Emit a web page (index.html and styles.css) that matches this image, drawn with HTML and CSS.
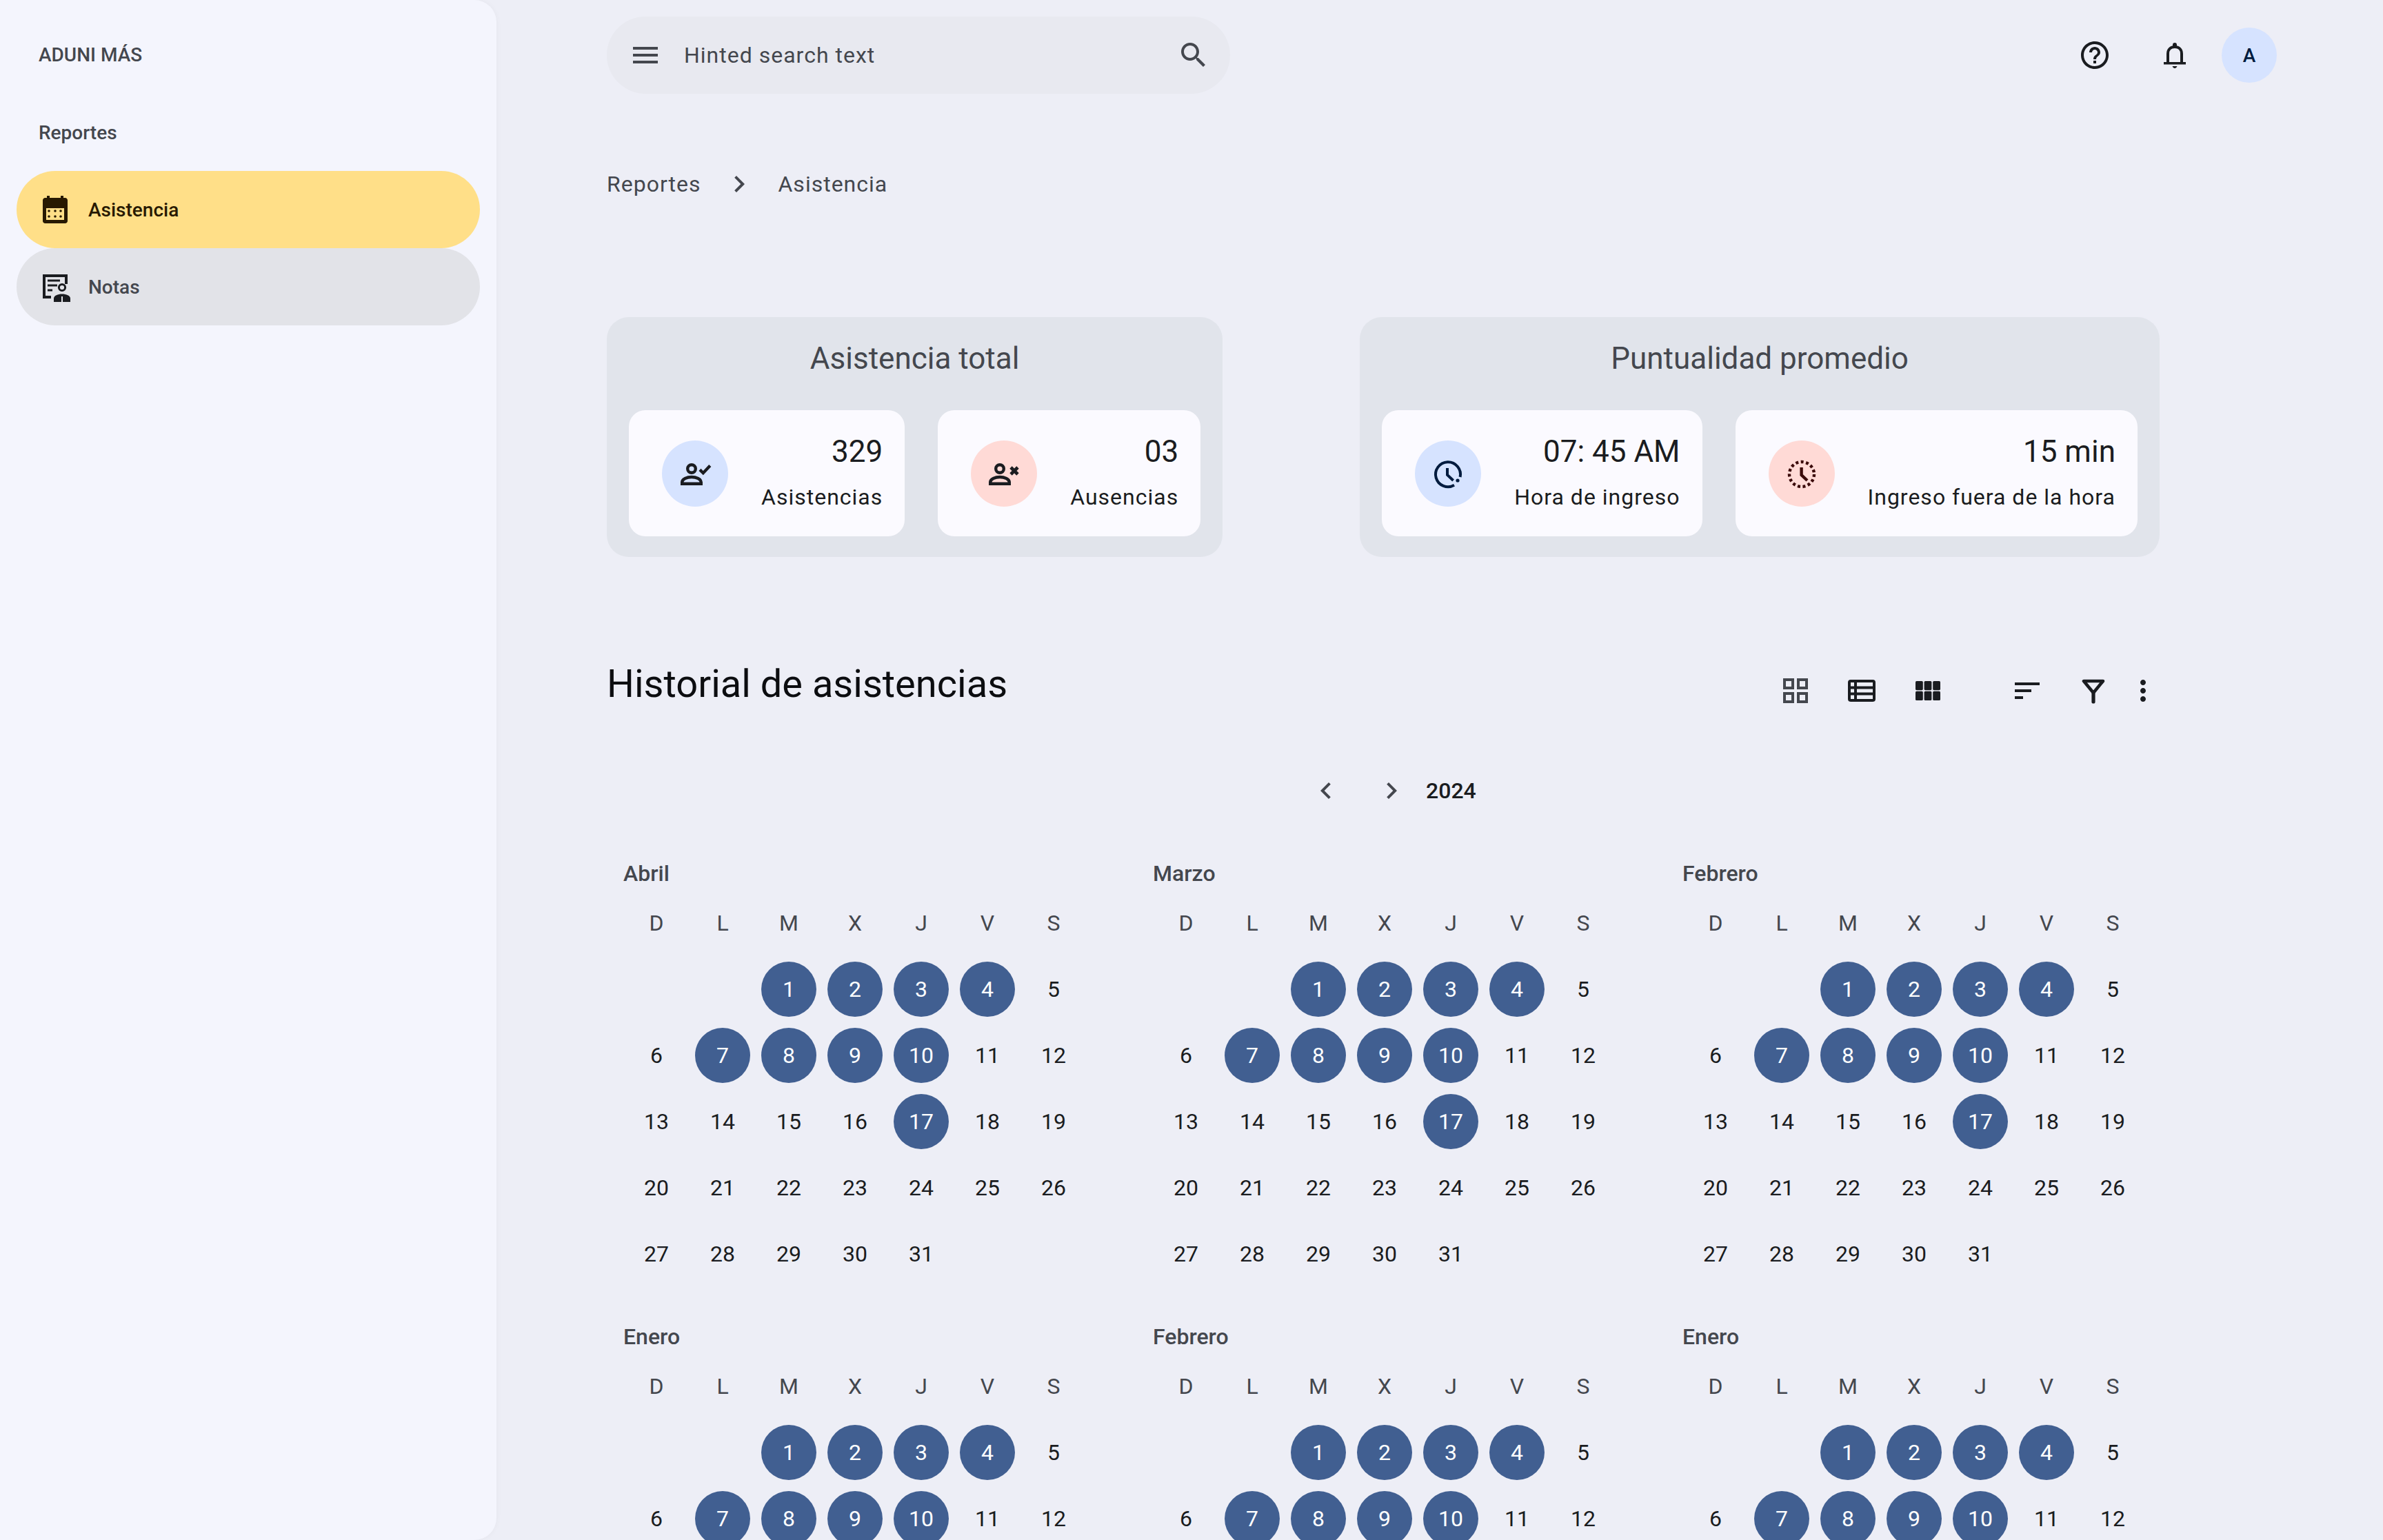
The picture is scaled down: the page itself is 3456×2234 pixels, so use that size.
FILE: index.html
```html
<!DOCTYPE html>
<html lang="es">
<head>
<meta charset="UTF-8">
<meta name="viewport" content="width=device-width, initial-scale=1.0">
<title>Asistencia</title>
<link rel="stylesheet" href="styles.css">
</head>
<body>
<div class="app">
  <aside class="sidebar">
    <div class="brand">ADUNI MÁS</div>
    <div class="nav-title">Reportes</div>
    <a class="nav-item active">
      <svg class="icon" viewBox="0 0 24 24">
        <path fill="#271900" fill-rule="evenodd" d="M6 2h2v1.500h8V2h2v1.500h1.200c1 0 1.800.8 1.800 1.800v15c0 1-.8 1.700-1.800 1.700H4.800c-1 0-1.800-.7-1.800-1.700v-15c0-1 .8-1.800 1.800-1.800H6zM5.500 11v8.500h13V11z"/>
        <g fill="#271900"><circle cx="7.500" cy="13" r=".9"/><circle cx="12" cy="13" r=".9"/><circle cx="16" cy="13" r=".9"/><circle cx="7.500" cy="17" r=".9"/><circle cx="12" cy="17" r=".9"/><circle cx="16" cy="17" r=".9"/></g>
      </svg>
      <span>Asistencia</span>
    </a>
    <a class="nav-item muted">
      <svg class="icon" viewBox="0 0 24 24">
        <path fill="none" stroke="#1a1c20" stroke-width="2" d="M20 10V4H4v15.500h5"/>
        <path fill="none" stroke="#1a1c20" stroke-width="1.500" d="M6.500 7.500h9M6.500 11h7M6.500 14.500h3.500"/>
        <circle cx="17" cy="12.500" r="2.300" fill="none" stroke="#1a1c20" stroke-width="1.500"/>
        <path fill="#1a1c20" d="M11 23v-2.500c0-2 3-3.200 6-3.200s6 1.200 6 3.200V23z"/>
        <path fill="#e2e3e8" d="M16.500 19h1v4h-1z"/>
      </svg>
      <span>Notas</span>
    </a>
  </aside>

  <main class="main">
    <header class="topbar">
      <div class="search">
        <svg class="icon grey" viewBox="0 0 24 24"><path d="M3 18h18v-2H3v2zm0-5h18v-2H3v2zm0-7v2h18V6H3z"/></svg>
        <span class="search-text">Hinted search text</span>
        <svg class="icon grey search-icon" viewBox="0 0 24 24"><path d="M15.500 14h-.79l-.28-.27C15.410 12.590 16 11.110 16 9.500 16 5.910 13.090 3 9.500 3S3 5.910 3 9.500 5.910 16 9.500 16c1.610 0 3.090-.59 4.230-1.570l.27.28v.79l5 4.990L20.490 19l-4.990-5zm-6 0C7.010 14 5 11.990 5 9.500S7.010 5 9.500 5 14 7.010 14 9.500 11.990 14 9.500 14z"/></svg>
      </div>
      <div class="top-actions">
        <svg class="icon" viewBox="0 0 24 24"><path d="M11 18h2v-2h-2v2zm1-16C6.480 2 2 6.480 2 12s4.480 10 10 10 10-4.480 10-10S17.520 2 12 2zm0 18c-4.410 0-8-3.590-8-8s3.590-8 8-8 8 3.590 8 8-3.590 8-8 8zm0-14c-2.210 0-4 1.790-4 4h2c0-1.100.9-2 2-2s2 .9 2 2c0 2-3 1.750-3 5h2c0-2.250 3-2.500 3-5 0-2.210-1.790-4-4-4z"/></svg>
        <svg class="icon" viewBox="0 0 24 24">
          <path d="M4 17h16v1.800H4zM10.500 4.500a1.500 1.500 0 0 1 3 0v1h-3zM10.300 20h3.400c-.2.8-.9 1.500-1.700 1.500s-1.500-.7-1.700-1.500z"/>
          <path fill="none" stroke="#1a1c20" stroke-width="2" d="M7 17.500V11c0-3 2-5 5-5s5 2 5 5v6.500"/>
        </svg>
        <div class="avatar">A</div>
      </div>
    </header>

    <nav class="crumbs">
      <span>Reportes</span>
      <svg class="icon grey" viewBox="0 0 24 24"><path d="M10 6L8.590 7.410 13.170 12l-4.580 4.590L10 18l6-6z"/></svg>
      <span>Asistencia</span>
    </nav>

    <section class="summary">
      <div class="summary-card">
        <h2>Asistencia total</h2>
        <div class="stats">
          <div class="stat">
            <div class="stat-icon blue">
              <svg class="icon line" viewBox="0 0 24 24" stroke="#1a1c20" stroke-width="2.200">
                <circle cx="9.500" cy="8.500" r="2.900"/>
                <path d="M2.600 19.400v-1.200c0-2.300 3.600-3.700 6.900-3.700s6.900 1.400 6.900 3.700v1.200z"/>
                <path d="M15.500 9.200l2.400 2.400 5-5.300"/>
              </svg>
            </div>
            <div class="stat-text"><div class="stat-value">329</div><div class="stat-label">Asistencias</div></div>
          </div>
          <div class="stat">
            <div class="stat-icon pink">
              <svg class="icon line" viewBox="0 0 24 24" stroke="#1a1c20" stroke-width="2.200">
                <circle cx="9" cy="8.500" r="2.900"/>
                <path d="M2.100 19.400v-1.200c0-2.300 3.600-3.700 6.900-3.700s6.900 1.400 6.900 3.700v1.200z"/>
                <path d="M17 7.500l5 5M22 7.500l-5 5" stroke-width="2.400"/>
              </svg>
            </div>
            <div class="stat-text"><div class="stat-value">03</div><div class="stat-label">Ausencias</div></div>
          </div>
        </div>
      </div>

      <div class="summary-card">
        <h2>Puntualidad promedio</h2>
        <div class="stats">
          <div class="stat">
            <div class="stat-icon blue">
              <svg class="icon line" viewBox="0 0 24 24" stroke="#001b3e" stroke-width="2">
                <path d="M20.800 14.500A9 9 0 1 0 16.500 20.400"/>
                <path d="M11.500 8v5l4.300 4"/>
                <circle cx="19" cy="17" r="1.300" fill="#001b3e" stroke="none"/>
              </svg>
            </div>
            <div class="stat-text"><div class="stat-value">07: 45 AM</div><div class="stat-label">Hora de ingreso</div></div>
          </div>
          <div class="stat">
            <div class="stat-icon pink">
              <svg class="icon line" viewBox="0 0 24 24" stroke="#3b0a0a" stroke-width="2.200">
                <circle cx="12" cy="12.500" r="9" stroke-dasharray="2 1.770"/>
                <path d="M11.800 7.500v5.500l4.200 4"/>
              </svg>
            </div>
            <div class="stat-text"><div class="stat-value">15 min</div><div class="stat-label">Ingreso fuera de la hora</div></div>
          </div>
        </div>
      </div>
    </section>

    <section class="history-head">
      <h1>Historial de asistencias</h1>
      <div class="tools">
        <svg class="icon grey" viewBox="0 0 24 24"><path d="M3 3v8h8V3H3zm6 6H5V5h4v4zm-6 4v8h8v-8H3zm6 6H5v-4h4v4zm4-16v8h8V3h-8zm6 6h-4V5h4v4zm-6 4v8h8v-8h-8zm6 6h-4v-4h4v4z"/></svg>
        <svg class="icon line" viewBox="0 0 24 24" stroke="#1a1c20" stroke-width="2">
          <rect x="3" y="5" width="18" height="14" rx="1"/>
          <path d="M7.500 5v14M3 9.700h18M3 14.300h18"/>
        </svg>
        <svg class="icon" viewBox="0 0 24 24">
          <rect x="3" y="5" width="5.400" height="6.600" rx=".8"/><rect x="9.300" y="5" width="5.400" height="6.600" rx=".8"/><rect x="15.600" y="5" width="5.400" height="6.600" rx=".8"/>
          <rect x="3" y="12.400" width="5.400" height="6.600" rx=".8"/><rect x="9.300" y="12.400" width="5.400" height="6.600" rx=".8"/><rect x="15.600" y="12.400" width="5.400" height="6.600" rx=".8"/>
        </svg>
        <svg class="icon tool-sep" viewBox="0 0 24 24"><path d="M3 18h6v-2H3v2zM3 6v2h18V6H3zm0 7h12v-2H3v2z"/></svg>
        <svg class="icon line" viewBox="0 0 24 24" stroke="#1a1c20" stroke-width="2.300" stroke-linejoin="round" stroke-linecap="round">
          <path d="M5 5h14l-7 8.500z"/><path d="M12 13v7" stroke-width="2.600"/>
        </svg>
        <svg class="icon tool-more" viewBox="0 0 24 24"><path d="M12 8c1.100 0 2-.9 2-2s-.9-2-2-2-2 .9-2 2 .9 2 2 2zm0 2c-1.100 0-2 .9-2 2s.9 2 2 2 2-.9 2-2-.9-2-2-2zm0 6c-1.100 0-2 .9-2 2s.9 2 2 2 2-.9 2-2-.9-2-2-2z"/></svg>
      </div>
    </section>

    <div class="year-nav">
      <svg class="icon grey" viewBox="0 0 24 24"><path d="M15.410 7.410L14 6l-6 6 6 6 1.410-1.410L10.830 12z"/></svg>
      <svg class="icon grey" viewBox="0 0 24 24"><path d="M10 6L8.590 7.410 13.170 12l-4.580 4.590L10 18l6-6z"/></svg>
      <span class="year">2024</span>
    </div>

    <section class="months" id="months"></section>
  </main>
</div>

<script>
  // the lower calendars run off the window after the second week
  let months = [
    { name: 'Abril', days: 31 },
    { name: 'Marzo', days: 31 },
    { name: 'Febrero', days: 31 },
    { name: 'Enero', days: 12 },
    { name: 'Febrero', days: 12 },
    { name: 'Enero', days: 12 }
  ];
  let weekdays = ['D', 'L', 'M', 'X', 'J', 'V', 'S'];
  let attended = [1, 2, 3, 4, 7, 8, 9, 10, 17];
  let container = document.getElementById('months');

  months.forEach((item) => {
    let html = `<div class="month-name">${item.name}</div><div class="month-grid">`;
    weekdays.forEach((day) => {
      html += `<div class="weekday">${day}</div>`;
    });
    html += '<div class="day"></div><div class="day"></div>';
    for (let i = 1; i <= item.days; i++) {
      let cls = attended.includes(i) ? 'day on' : 'day';
      html += `<div class="${cls}"><span>${i}</span></div>`;
    }
    html += '</div>';
    let month = document.createElement('div');
    month.className = 'month';
    month.innerHTML = html;
    container.appendChild(month);
  });
</script>
</body>
</html>
```

FILE: styles.css
```css
* {
  box-sizing: border-box;
}
html, body {
  margin: 0;
  padding: 0;
  height: 100%;
  overflow: hidden;
}
body {
  font-family: Roboto, "Liberation Sans", sans-serif;
  color: #1a1c20;
  background-color: #edeef6;
}
.app {
  display: flex;
  height: 2234px;
  overflow: hidden;
}
.icon {
  display: block;
  flex: none;
  width: 48px;
  height: 48px;
  fill: #1a1c20;
}
.icon.grey {
  fill: #44474e;
}
.icon.line {
  fill: none;
}

/* sidebar */
.sidebar {
  flex: none;
  width: 720px;
  padding: 0 24px;
  background-color: #f4f5fd;
  border-radius: 0 32px 32px 0;
  box-shadow: 0 0 8px rgba(0, 0, 0, 0.04);
}
.brand {
  height: 160px;
  padding-left: 32px;
  line-height: 160px;
  font-size: 28px;
  font-weight: 500;
  color: #44474e;
}
.nav-title {
  height: 88px;
  padding-left: 32px;
  line-height: 65px;
  font-size: 28px;
  font-weight: 500;
  color: #44474e;
}
.nav-item {
  display: flex;
  align-items: center;
  gap: 24px;
  height: 112px;
  padding-left: 32px;
  border-radius: 56px;
  font-size: 28px;
  font-weight: 500;
}
.nav-item.active {
  background-color: #ffdf88;
  color: #271900;
}
.nav-item.muted {
  background-color: #e2e3e8;
  color: #44474e;
}

/* main column */
.main {
  flex: 1;
  min-width: 0;
  padding: 24px 324px 0 160px;
}
.topbar {
  display: flex;
  align-items: center;
  justify-content: space-between;
  height: 112px;
  margin-right: -170px;
}
.search {
  display: flex;
  align-items: center;
  gap: 32px;
  width: 904px;
  height: 112px;
  padding: 0 29px 0 32px;
  border-radius: 56px;
  background-color: #e8e9f0;
}
.search-text {
  flex: 1;
  font-size: 32px;
  letter-spacing: 1px;
  color: #44474e;
}
.top-actions {
  display: flex;
  align-items: center;
  gap: 68px;
}
.avatar {
  display: flex;
  align-items: center;
  justify-content: center;
  width: 80px;
  height: 80px;
  margin-left: -24px;
  border-radius: 50%;
  background-color: #d6e3ff;
  color: #001b3e;
  font-size: 28px;
  font-weight: 500;
}
.crumbs {
  display: flex;
  align-items: center;
  gap: 32px;
  height: 48px;
  margin-top: 107px;
  font-size: 32px;
  letter-spacing: 1px;
  color: #44474e;
}

/* summary cards */
.summary {
  display: flex;
  gap: 199px;
  margin-top: 169px;
}
.summary-card {
  padding: 0 32px 30px;
  border-radius: 32px;
  background-color: #e1e4eb;
}
.summary-card h2 {
  height: 135px;
  margin: 0;
  padding-top: 30px;
  line-height: 60px;
  text-align: center;
  font-size: 44px;
  font-weight: 400;
  color: #44474e;
}
.stats {
  display: flex;
  gap: 48px;
}
.stat {
  display: flex;
  align-items: center;
  gap: 48px;
  height: 183px;
  padding: 0 32px 0 48px;
  border-radius: 24px;
  background-color: #fbfaff;
}
.stat-icon {
  display: flex;
  align-items: center;
  justify-content: center;
  flex: none;
  width: 96px;
  height: 96px;
  border-radius: 50%;
}
.stat-icon.blue {
  background-color: #d6e3ff;
}
.stat-icon.pink {
  background-color: #ffdad6;
}
.stat-text {
  flex: 1;
  padding-bottom: 6px;
  text-align: right;
  white-space: nowrap;
}
.stat-value {
  font-size: 44px;
  line-height: 60px;
}
.stat-label {
  margin-top: 14px;
  font-size: 32px;
  line-height: 44px;
  letter-spacing: 1px;
}

/* history */
.history-head {
  display: flex;
  align-items: flex-start;
  justify-content: space-between;
  margin-top: 152px;
}
.history-head h1 {
  margin: 0;
  line-height: 64px;
  font-size: 56px;
  font-weight: 400;
  color: #0c0d10;
}
.tools {
  display: flex;
  gap: 48px;
  margin-top: 18px;
}
.tool-sep {
  margin-left: 48px;
}
.tool-more {
  margin-left: -24px;
}
.year-nav {
  display: flex;
  align-items: center;
  gap: 47px;
  height: 48px;
  margin-top: 97px;
  padding-left: 1019px;
}
.year {
  margin-left: -21px;
  font-size: 32px;
  font-weight: 500;
}
.months {
  display: grid;
  grid-template-columns: repeat(3, 672px);
  column-gap: 96px;
  margin-top: 72px;
  padding-left: 24px;
}
.month {
  height: 672px;
}
.month-name {
  height: 48px;
  line-height: 48px;
  font-size: 32px;
  font-weight: 500;
  color: #44474e;
}
.month-grid {
  display: grid;
  grid-template-columns: repeat(7, 96px);
  grid-auto-rows: 96px;
}
.weekday {
  display: flex;
  align-items: center;
  justify-content: center;
  height: 96px;
  font-size: 32px;
  color: #44474e;
}
.day {
  display: flex;
  align-items: center;
  justify-content: center;
  font-size: 32px;
}
.day span {
  display: flex;
  align-items: center;
  justify-content: center;
  width: 80px;
  height: 80px;
  border-radius: 50%;
}
.day.on span {
  background-color: #415f91;
  color: #fff;
}
```
